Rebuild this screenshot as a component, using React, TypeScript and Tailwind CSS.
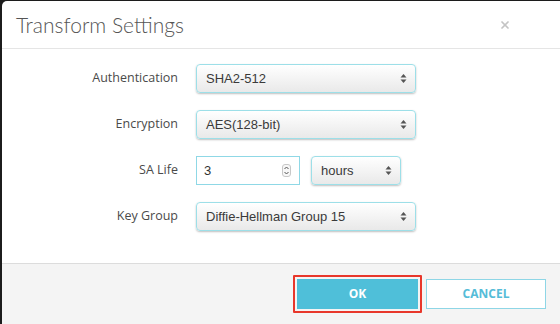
import { X } from "lucide-react"

function Arrows() {
  return (
    <svg width="7" height="11" viewBox="0 0 7 11" className="shrink-0">
      <path d="M3.5 1 L6.5 4.5 H0.5 Z" fill="#555" />
      <path d="M3.5 10 L6.5 6.5 H0.5 Z" fill="#555" />
    </svg>
  )
}

function FakeSelect({ value, width }: { value: string; width: string }) {
  return (
    <div
      className={`${width} flex h-[29px] items-center justify-between rounded-[4px] border border-[#9ddfe8] bg-gradient-to-b from-white to-[#e9e9e9] pl-[9px] pr-[8px] text-[13px] text-[#3a3a3a] shadow-[0_1px_2px_rgba(0,0,0,0.25)]`}
      style={{ fontFamily: '"Liberation Sans", Arial, sans-serif' }}
    >
      <span>{value}</span>
      <Arrows />
    </div>
  )
}

function Spinner() {
  return (
    <div className="flex h-[13px] w-[9px] flex-col items-center justify-center rounded-[3px] border border-[#c8c8c8] bg-[#f7f7f7]">
      <svg width="7" height="11" viewBox="0 0 7 11">
        <path d="M1.5 4 L3.5 2 L5.5 4" stroke="#555" strokeWidth="1" fill="none" />
        <path d="M1.5 7 L3.5 9 L5.5 7" stroke="#555" strokeWidth="1" fill="none" />
      </svg>
    </div>
  )
}

export default function App() {
  const labelCls = "w-[176px] text-right text-[12.5px] text-[#4a4a4a]"

  return (
    <div className="h-[324px] w-[560px] overflow-hidden bg-[#1c1c1c] pl-[2px] pt-[1px]" style={{ fontFamily: '"Open Sans", sans-serif' }}>
      <div className="flex h-[330px] w-[564px] flex-col overflow-hidden rounded-[5px] bg-white">
        {/* header */}
        <div className="flex h-[48px] items-center justify-between border-b border-[#e5e5e5] pl-[14px] pr-[55px]">
          <h1 className="text-[21px] font-light text-[#555]" style={{ fontFamily: "Lato, sans-serif" }}>
            Transform Settings
          </h1>
          <X className="size-[12px] text-[#c4c4c4]" strokeWidth={3.5} />
        </div>

        {/* body */}
        <div className="flex h-[215px] flex-col gap-[17px] border-b border-[#dcdcdc] pt-[15px]">
          <div className="flex items-center gap-[18px]">
            <div className={labelCls}>Authentication</div>
            <FakeSelect value="SHA2-512" width="w-[220px]" />
          </div>
          <div className="flex items-center gap-[18px]">
            <div className={labelCls}>Encryption</div>
            <FakeSelect value="AES(128-bit)" width="w-[220px]" />
          </div>
          <div className="flex items-center gap-[18px]">
            <div className={labelCls}>SA Life</div>
            <div
              className="flex h-[29px] w-[104px] items-center justify-between border border-[#8fd8e6] bg-white pl-[7px] pr-[8px] text-[13px] text-[#333]"
              style={{ fontFamily: '"Liberation Sans", Arial, sans-serif' }}
            >
              <span>3</span>
              <Spinner />
            </div>
            <div className="ml-[-7px]">
              <FakeSelect value="hours" width="w-[90px]" />
            </div>
          </div>
          <div className="flex items-center gap-[18px]">
            <div className={labelCls}>Key Group</div>
            <FakeSelect value="Diffie-Hellman Group 15" width="w-[220px]" />
          </div>
        </div>

        {/* footer */}
        <div className="flex flex-1 items-start gap-[4px] bg-[#f4f4f4] pl-[291px] pt-[11px]">
          <div className="rounded-[1px] border-[2px] border-[#e8372b] p-[2px]">
            <button className="flex h-[30px] w-[121px] items-center justify-center bg-[#4fbfd9] text-[12px] font-bold text-white">
              OK
            </button>
          </div>
          <button className="mt-[4px] flex h-[30px] w-[120px] items-center justify-center border border-[#8ed6e6] bg-white text-[12px] font-bold text-[#55bcd8]">
            CANCEL
          </button>
        </div>
      </div>
    </div>
  )
}
